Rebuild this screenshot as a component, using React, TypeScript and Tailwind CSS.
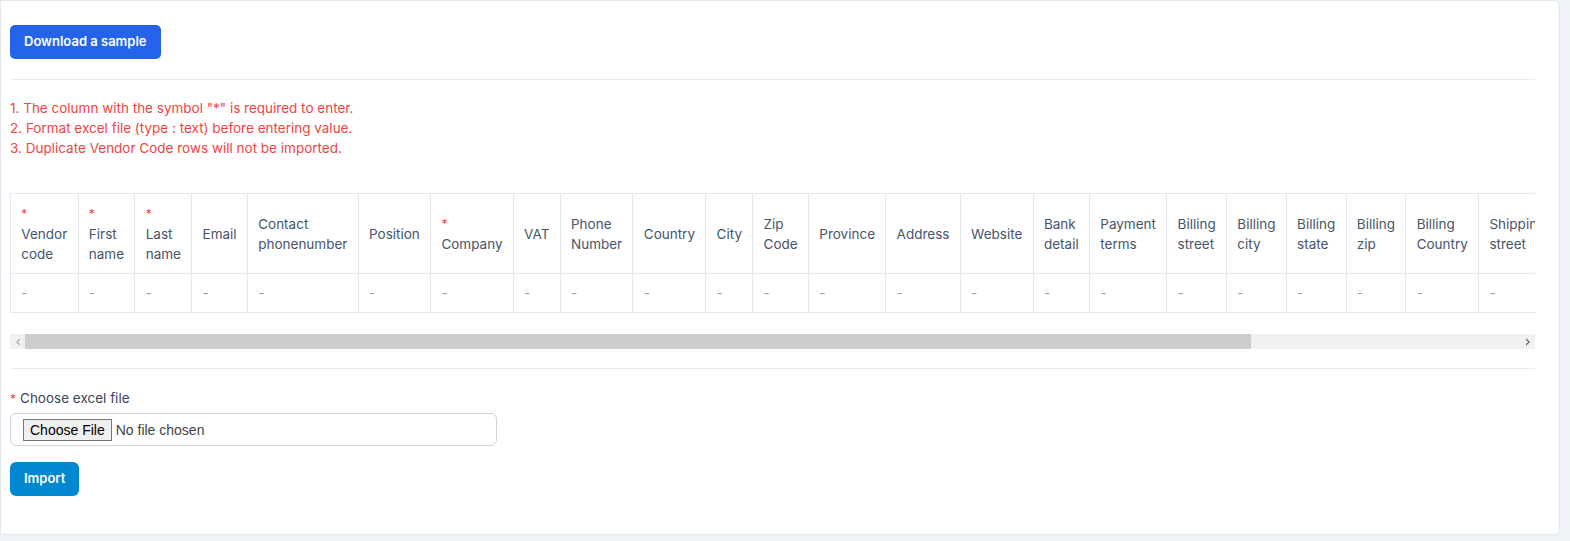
import React from "react";

const columns: { label: string[]; required?: boolean }[] = [
  { label: ["Vendor", "code"], required: true },
  { label: ["First", "name"], required: true },
  { label: ["Last", "name"], required: true },
  { label: ["Email"] },
  { label: ["Contact", "phonenumber"] },
  { label: ["Position"] },
  { label: ["Company"], required: true },
  { label: ["VAT"] },
  { label: ["Phone", "Number"] },
  { label: ["Country"] },
  { label: ["City"] },
  { label: ["Zip", "Code"] },
  { label: ["Province"] },
  { label: ["Address"] },
  { label: ["Website"] },
  { label: ["Bank", "detail"] },
  { label: ["Payment", "terms"] },
  { label: ["Billing", "street"] },
  { label: ["Billing", "city"] },
  { label: ["Billing", "state"] },
  { label: ["Billing", "zip"] },
  { label: ["Billing", "Country"] },
  { label: ["Shipping", "street"] },
  { label: ["Shipping", "city"] },
  { label: ["Shipping", "state"] },
  { label: ["Shipping", "zip"] },
  { label: ["Shipping", "Country"] },
];

const notes = [
  '1. The column with the symbol "*" is required to enter.',
  "2. Format excel file (type : text) before entering value.",
  "3. Duplicate Vendor Code rows will not be imported.",
];

const ScrollArrow = ({ dir, dim }: { dir: "left" | "right"; dim?: boolean }) => (
  <div className="w-[15px] h-[15px] flex items-center justify-center bg-[#f1f1f1]">
    <svg width="6" height="8" viewBox="0 0 6 8" aria-hidden="true">
      {dir === "left" ? (
        <polygon points="5,0.5 5,2 2.5,4 5,6 5,7.5 1,4" fill={dim ? "#a3a3a3" : "#505050"} />
      ) : (
        <polygon points="1,0.5 1,2 3.5,4 1,6 1,7.5 5,4" fill={dim ? "#a3a3a3" : "#505050"} />
      )}
    </svg>
  </div>
);

export default function App() {
  return (
    <div className="min-h-screen bg-[#eff2f7] pr-[10px] pb-[7px] font-['Inter',sans-serif]">
      <div className="bg-white border border-[#e3e8ef] rounded-r-md pl-[9px] pr-[24px] pt-[24px] pb-[38px]">
        {/* Sample download */}
        <button
          type="button"
          className="h-[34px] px-[14px] rounded-[5px] bg-[#2563eb] text-white text-[13px] font-semibold"
        >
          Download a sample
        </button>
        <hr className="mt-[20px] border-t border-[#e9ecf0]" />

        {/* Notes */}
        <div className="mt-[18px] text-[13.5px] leading-[20px] text-[#ef4444]">
          {notes.map((n) => (
            <p key={n}>{n}</p>
          ))}
        </div>

        {/* Preview table */}
        <div className="mt-[35px] overflow-hidden">
          <table className="w-full border-collapse text-[13.5px] leading-[20px] text-[#475569]">
            <thead>
              <tr>
                {columns.map((c) => (
                  <th
                    key={c.label.join(" ")}
                    className="border border-[#e2e8f0] px-[10.3px] py-[9px] text-left font-normal align-middle"
                  >
                    {c.required && (
                      <>
                        <span className="text-[#ef4444] text-[12px]">*</span>
                        <br />
                      </>
                    )}
                    {c.label.map((w, i) => (
                      <React.Fragment key={w}>
                        {i > 0 && " "}
                        {w}
                      </React.Fragment>
                    ))}
                  </th>
                ))}
              </tr>
            </thead>
            <tbody>
              <tr>
                {columns.map((c) => (
                  <td
                    key={c.label.join(" ")}
                    className="border border-[#e2e8f0] px-[10.3px] py-[9px] text-[#94a3b8]"
                  >
                    -
                  </td>
                ))}
              </tr>
            </tbody>
          </table>
        </div>

        {/* Horizontal scrollbar */}
        <div className="mt-[21px] flex h-[15px] bg-[#f1f1f1]">
          <ScrollArrow dir="left" dim />
          <div className="flex-1">
            <div className="h-full w-[82%] bg-[#cdcdcd]" />
          </div>
          <ScrollArrow dir="right" />
        </div>

        <hr className="mt-[19px] border-t border-[#e9ecf0]" />

        {/* Upload */}
        <div className="mt-[19px] text-[13.5px] leading-[20px] text-[#3b4556]">
          <span className="text-[#ef4444] text-[12px] mr-[4px]">*</span>
          Choose excel file
        </div>
        <input
          type="file"
          className="mt-[4px] block w-[487px] h-[33px] border border-[#ccd4e0] rounded-[6px] px-[12px] py-[4.5px] text-[14px] text-[#444] font-['Liberation_Sans',Arial,sans-serif] file:mr-[4px] file:px-[6px] file:h-[22px] file:bg-[#efefef] file:border file:border-[#767676] file:text-black"
        />
        <button
          type="button"
          className="mt-[16px] h-[34px] px-[14px] rounded-[6px] bg-[#0288d1] text-white text-[13px] font-semibold"
        >
          Import
        </button>
      </div>
    </div>
  );
}
